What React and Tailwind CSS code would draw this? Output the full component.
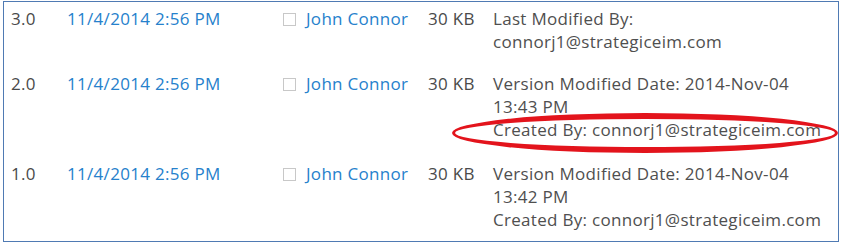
import React from "react";

const rows = [
  { v: "3.0", lines: ["Last Modified By:", "connorj1@strategiceim.com"], pb: "pb-[19px]" },
  { v: "2.0", lines: ["Version Modified Date: 2014-Nov-04", "13:43 PM", "Created By: connorj1@strategiceim.com"], pb: "pb-[21px]" },
  { v: "1.0", lines: ["Version Modified Date: 2014-Nov-04", "13:42 PM", "Created By: connorj1@strategiceim.com"], pb: "pb-0" },
];

function Row({ r }) {
  return (
    <div className={`flex items-start ${r.pb}`}>
      <div className="w-[56px] text-[#4a4a4a]">{r.v}</div>
      <div className="w-[216px] text-[#2681cc]">11/4/2014 2:56 PM</div>
      <div className="w-[23px] flex pt-[6px]">
        <span className="block w-[13px] h-[13px] border border-[#c8c8c8] bg-white"></span>
      </div>
      <div className="w-[122px] text-[#2681cc]">John Connor</div>
      <div className="w-[65px] text-[#4a4a4a]">30 KB</div>
      <div className="flex flex-col text-[#4f4f4f]">
        {r.lines.map((l, i) => (
          <div key={i}>{l}</div>
        ))}
      </div>
    </div>
  );
}

export default function App() {
  return (
    <div className="w-[845px] h-[244px] bg-white overflow-hidden relative">
      <div
        className="ml-[3px] mt-[1px] w-[836px] h-[241px] border border-[#4f7ab3] pl-[7px] pt-[5px] text-[17px] leading-[23px] tracking-[0.3px] whitespace-nowrap"
        style={{ fontFamily: '"Open Sans", "Noto Sans", sans-serif' }}
      >
        {rows.map((r) => (
          <Row key={r.v} r={r} />
        ))}
      </div>
      <svg className="absolute left-0 top-0 pointer-events-none" width="845" height="244">
        <path
          fillRule="evenodd"
          fill="#e3141c"
          d="M452,133 a193,20 0 1,0 386,0 a193,20 0 1,0 -386,0 Z M455,133 a190,14 0 1,0 380,0 a190,14 0 1,0 -380,0 Z"
        />
      </svg>
    </div>
  );
}
